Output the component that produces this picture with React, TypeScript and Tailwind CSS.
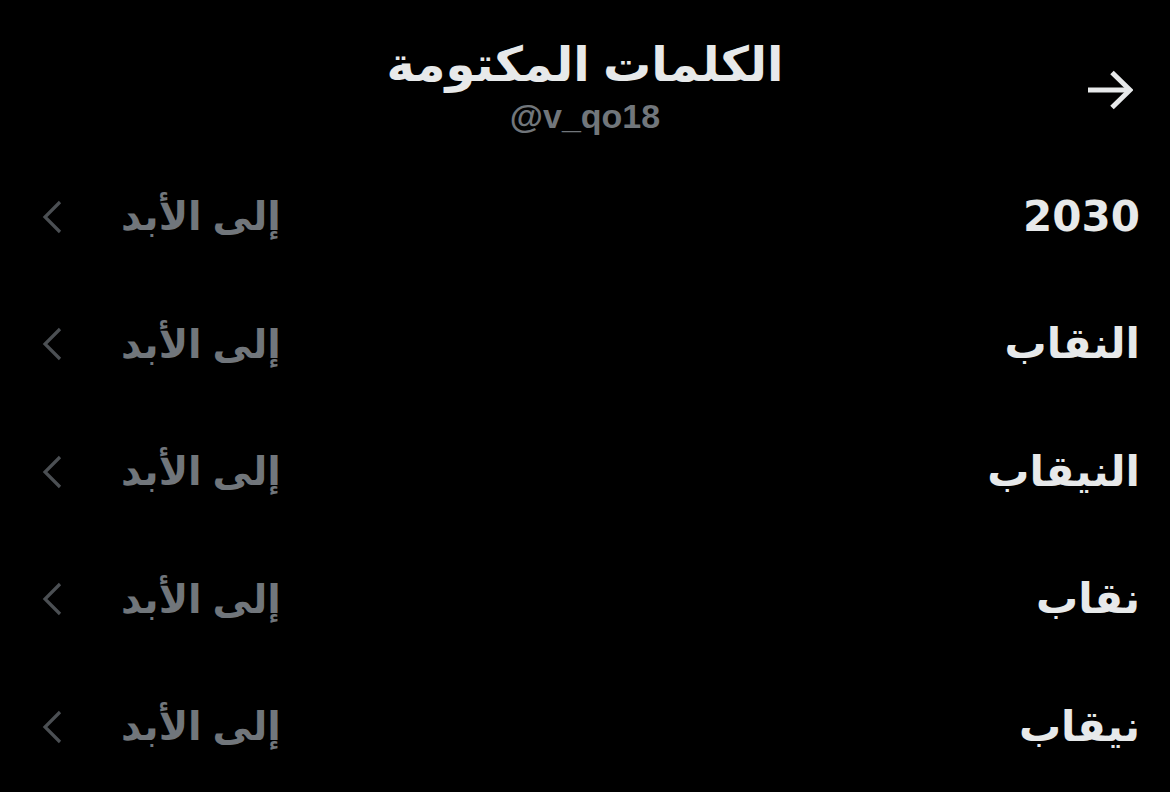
import React from "react";

const WORDS = ["2030", "النقاب", "النيقاب", "نقاب", "نيقاب"];

const FONT = {
  fontFamily: '"Liberation Sans", "DejaVu Sans", "Noto Sans", sans-serif',
};

const WORD_FONT = {
  fontFamily: '"DejaVu Sans", "Noto Sans", sans-serif',
};

function BackArrow() {
  return (
    <svg width="48" height="48" viewBox="0 0 48 48" fill="none" aria-hidden>
      <path d="M3 24h40" stroke="#e7e9ea" strokeWidth="5" />
      <path d="M27 6.5l18 17.5-18 17.5" stroke="#e7e9ea" strokeWidth="5" strokeLinejoin="miter" />
    </svg>
  );
}

function Chevron() {
  return (
    <svg width="22" height="34" viewBox="0 0 22 34" fill="none" aria-hidden>
      <path d="M19 2L4 17l15 15" stroke="#4b4f53" strokeWidth="3.2" />
    </svg>
  );
}

export default function App() {
  return (
    <div dir="rtl" className="h-[792px] w-[1170px] overflow-hidden bg-black" style={FONT}>
      <header className="relative flex h-[153px] flex-col items-center pt-[36px]">
        <h1 className="text-[48px] font-bold leading-[58px] text-[#e7e9ea]">الكلمات المكتومة</h1>
        <div dir="ltr" className="mt-[2px] text-[34px] font-bold leading-[40px] text-[#71767b]">
          @v_qo18
        </div>
        <button className="absolute right-[37px] top-[66px]" aria-label="رجوع">
          <BackArrow />
        </button>
      </header>

      <ul>
        {WORDS.map((w) => (
          <li key={w} className="flex h-[127.5px] items-center justify-between pl-[41px] pr-[30px]">
            <span className="text-[42px] font-bold leading-none text-[#e7e9ea]" style={WORD_FONT}>
              {w}
            </span>
            <div className="flex items-center gap-[58px]">
              <span className="text-[39.5px] font-bold leading-none text-[#71767b]">إلى الأبد</span>
              <Chevron />
            </div>
          </li>
        ))}
      </ul>
    </div>
  );
}
